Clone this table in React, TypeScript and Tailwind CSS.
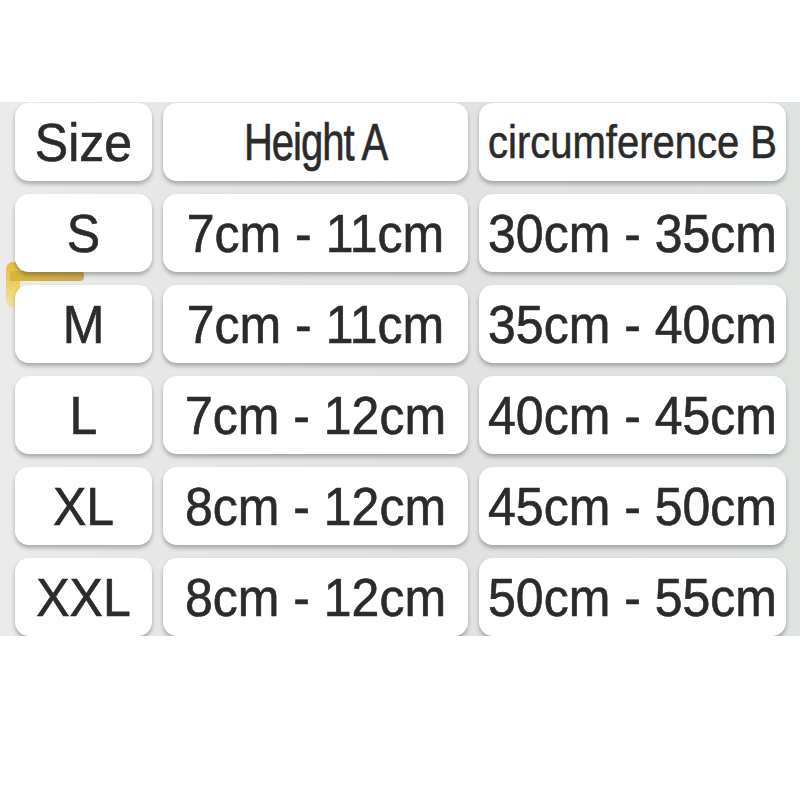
import { Fragment, type ReactElement } from 'react'

interface Row {
  size: string
  height: string
  circ: string
}

const rows: Row[] = [
  { size: 'S', height: '7cm - 11cm', circ: '30cm - 35cm' },
  { size: 'M', height: '7cm - 11cm', circ: '35cm - 40cm' },
  { size: 'L', height: '7cm - 12cm', circ: '40cm - 45cm' },
  { size: 'XL', height: '8cm - 12cm', circ: '45cm - 50cm' },
  { size: 'XXL', height: '8cm - 12cm', circ: '50cm - 55cm' },
]

const cell =
  'flex h-[78px] items-center justify-center rounded-[14px] bg-white shadow-[0_3px_4px_rgba(0,0,0,0.28)]'

const label =
  'inline-block scale-y-[1.09] text-[50px] leading-none [-webkit-text-stroke:0.6px_#2b2b2b]'

const App = (): ReactElement => {
  return (
    <div className="h-[800px] w-[800px] bg-white pt-[102px] font-['Liberation_Sans',Arial,sans-serif] text-[#2b2b2b]">
      <div className="relative h-[534px] overflow-hidden bg-gradient-to-r from-[#ebebeb] via-[#e2e2e2] to-[#dfe3df]">
        {/* leftover gold strap from the product photo */}
        <div className="absolute left-[6px] top-[160px] h-[46px] w-[14px] rounded-full bg-gradient-to-b from-[#e2bd3e] via-[#ecd069] to-[#f3e3a8]"></div>
        <div className="absolute left-[10px] top-[169px] h-[10px] w-[74px] rounded-r-sm bg-gradient-to-r from-[#d9b43c] to-[#c8aa55]"></div>

        <div className="relative grid grid-cols-[137px_305px_307px] gap-x-[11px] gap-y-[13px] pl-[15px] pt-[1px]">
          <div className={cell}>
            <span className={label}>Size</span>
          </div>
          <div className={cell}>
            <span className="inline-block scale-y-[1.3] text-[40px] leading-none tracking-[-1px] [-webkit-text-stroke:0.5px_#2b2b2b]">
              Height A
            </span>
          </div>
          <div className={cell}>
            <span className="inline-block scale-y-[1.15] text-[40px] leading-none [-webkit-text-stroke:0.5px_#2b2b2b]">
              circumference B
            </span>
          </div>

          {rows.map((row) => (
            <Fragment key={row.size}>
              <div className={cell}>
                <span className={label}>{row.size}</span>
              </div>
              <div className={cell}>
                <span className={label}>{row.height}</span>
              </div>
              <div className={cell}>
                <span className={label}>{row.circ}</span>
              </div>
            </Fragment>
          ))}
        </div>
      </div>
    </div>
  )
}

export default App
